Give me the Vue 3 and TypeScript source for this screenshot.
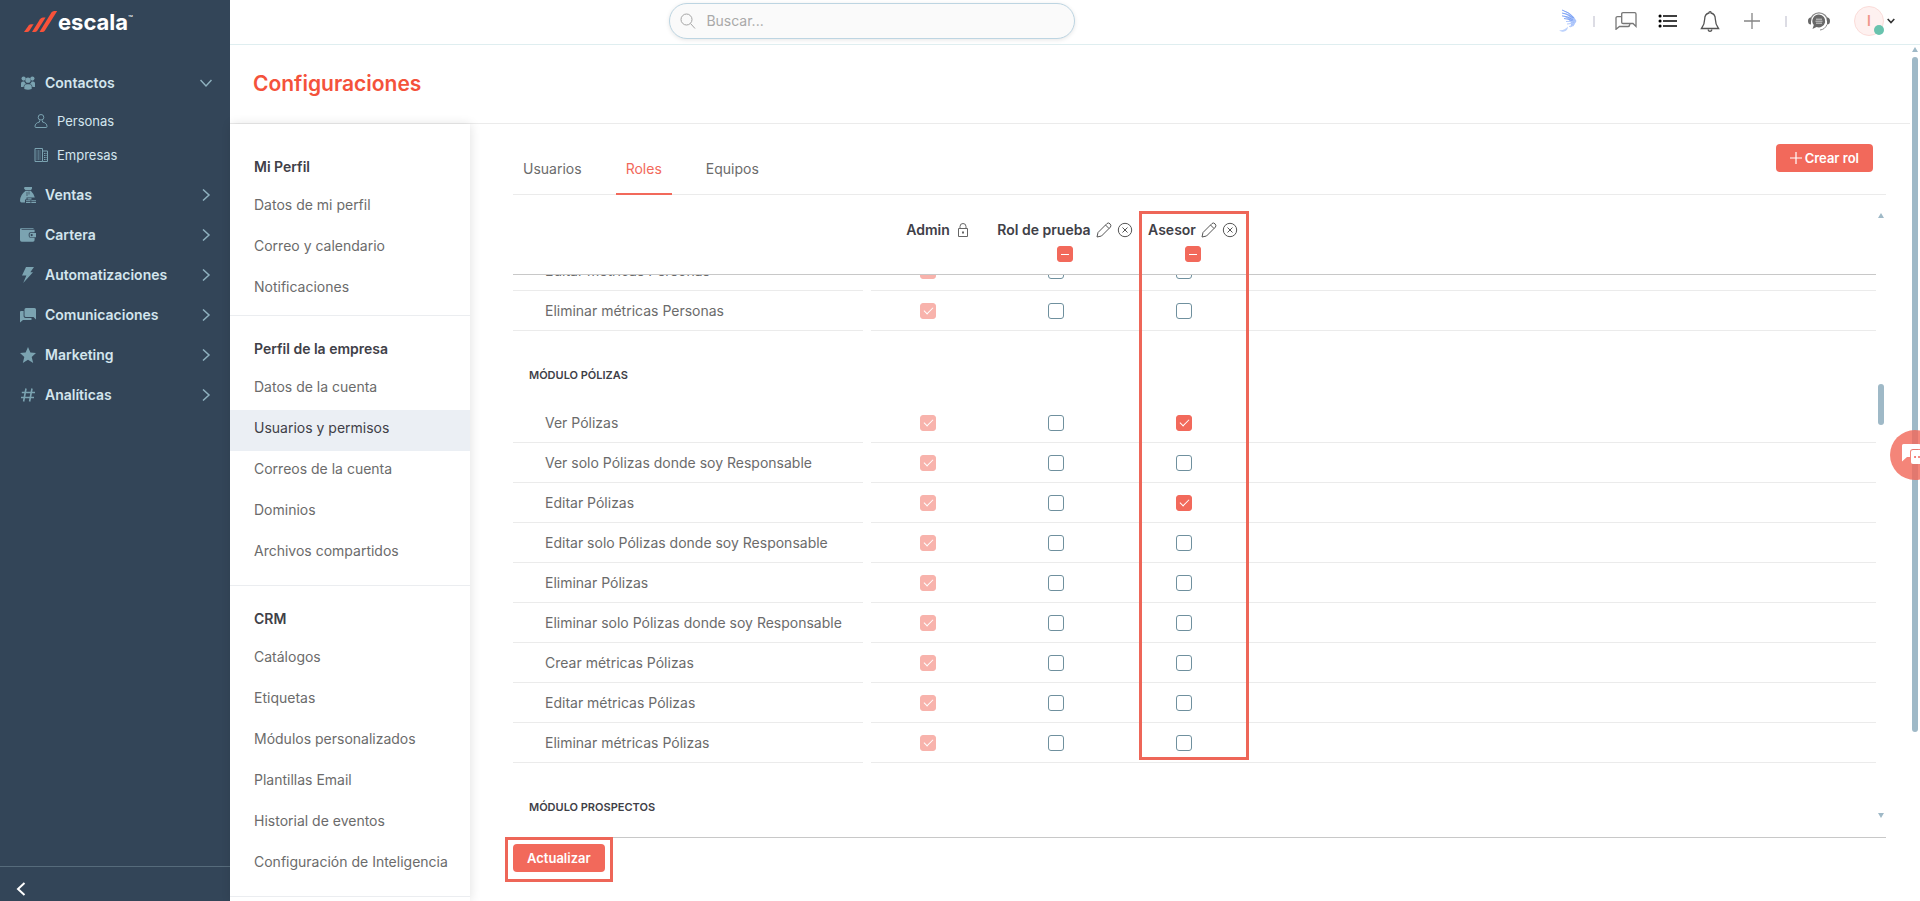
<script setup lang="ts">
import { onMounted, ref } from 'vue'

interface MenuItem {
  label: string
  icon: string
  children?: { label: string; icon: string }[]
}

interface Section {
  title: string
  items: string[]
}

interface Role {
  name: string
  locked?: boolean
}

interface Permission {
  name: string
  granted: boolean[]
}

interface Module {
  title?: string
  permissions: Permission[]
}

const menu: MenuItem[] = [
  {
    label: 'Contactos',
    icon: 'group',
    children: [
      { label: 'Personas', icon: 'person' },
      { label: 'Empresas', icon: 'building' },
    ],
  },
  { label: 'Ventas', icon: 'bag' },
  { label: 'Cartera', icon: 'wallet' },
  { label: 'Automatizaciones', icon: 'bolt' },
  { label: 'Comunicaciones', icon: 'chat' },
  { label: 'Marketing', icon: 'star' },
  { label: 'Analíticas', icon: 'hash' },
]

const sections: Section[] = [
  { title: 'Mi Perfil', items: ['Datos de mi perfil', 'Correo y calendario', 'Notificaciones'] },
  {
    title: 'Perfil de la empresa',
    items: ['Datos de la cuenta', 'Usuarios y permisos', 'Correos de la cuenta', 'Dominios', 'Archivos compartidos'],
  },
  {
    title: 'CRM',
    items: [
      'Catálogos',
      'Etiquetas',
      'Módulos personalizados',
      'Plantillas Email',
      'Historial de eventos',
      'Configuración de Inteligencia',
    ],
  },
]
const activeSetting = 'Usuarios y permisos'

const tabs = ['Usuarios', 'Roles', 'Equipos']
const activeTab = ref('Roles')

const roles: Role[] = [{ name: 'Admin', locked: true }, { name: 'Rol de prueba' }, { name: 'Asesor' }]

const row = (name: string, asesor = false): Permission => ({ name, granted: [true, false, asesor] })

const modules = ref<Module[]>([
  { permissions: [row('Editar métricas Personas'), row('Eliminar métricas Personas')] },
  {
    title: 'MÓDULO PÓLIZAS',
    permissions: [
      row('Ver Pólizas', true),
      row('Ver solo Pólizas donde soy Responsable'),
      row('Editar Pólizas', true),
      row('Editar solo Pólizas donde soy Responsable'),
      row('Eliminar Pólizas'),
      row('Eliminar solo Pólizas donde soy Responsable'),
      row('Crear métricas Pólizas'),
      row('Editar métricas Pólizas'),
      row('Eliminar métricas Pólizas'),
    ],
  },
  { title: 'MÓDULO PROSPECTOS', permissions: [] },
])

const scroller = ref<HTMLElement | null>(null)
onMounted(() => {
  if (scroller.value) scroller.value.scrollTop = 24
})
</script>

<template>
  <div class="app">
    <aside class="sidebar">
      <a class="logo" href="#" aria-label="escala">
        <svg width="34" height="22" viewBox="0 0 34 22" aria-hidden="true">
          <g fill="#f9523a">
            <path d="M0 21 4.600 14.600Q5.600 13.300 7.200 13.300H9.600L5.200 19.900Q4.400 21 3 21Z" />
            <path d="M8 21 16 8.200Q17.200 6.500 19 6.500H21.600L13.200 19.700Q12.300 21 10.800 21Z" />
            <path d="M15.500 21 27.400 1.600Q28.400 0 30.200 0H33.200L20.800 19.700Q19.900 21 18.400 21Z" />
          </g>
        </svg>
        <span class="brand">escala</span><span class="tm">™</span>
      </a>
      <nav class="menu" aria-label="Principal">
        <template v-for="item in menu" :key="item.label">
          <a class="menu-item" href="#">
            <svg class="menu-icon" width="16" height="16" viewBox="0 0 16 16" aria-hidden="true">
              <g v-if="item.icon === 'group'">
                <circle cx="3.600" cy="3.600" r="2.100" />
                <circle cx="12.400" cy="3.600" r="2.100" />
                <circle cx="8" cy="5.200" r="2.600" />
                <path d="M1 12V8.500Q1 6.500 3 6.500H4.300Q5 8.300 6 8.700 3.500 9.400 3.500 12Z" />
                <path d="M15 12V8.500Q15 6.500 13 6.500H11.700Q11 8.300 10 8.700 12.500 9.400 12.500 12Z" />
                <path d="M4.300 14V11.500Q4.300 9.200 6.600 9.200H9.400Q11.700 9.200 11.700 11.500V14Q8 15.500 4.300 14Z" />
              </g>
              <g v-else-if="item.icon === 'bag'">
                <path d="M4.500 0H12V1.500L11 3.300H5.500L4 1.500Z" />
                <path d="M5.300 4H11Q14.500 7.500 14.800 10.500H6.500V12.500H5V15.500H1.500Q0 15.500 0 13.500 .5 7.500 5.300 4Z" />
                <path d="M7.500 11.300H11.500V12.500H7.500ZM6 13.200H10.500V14.300H6ZM11.300 13.200H16V14.300H11.300ZM6 15H10.500V16H6ZM11.300 15H16V16H11.300Z" />
                <path d="M7 5V9M9 4.500V7.500" stroke="#334558" stroke-width=".7" />
              </g>
              <g v-else-if="item.icon === 'wallet'">
                <path d="M1 1.200H13.500V2H1.600V2.700H14.600V5.200H10.500Q8.700 5.200 8.700 7V9Q8.700 10.800 10.500 10.800H14.600V13Q14.600 14.800 13 14.800H1.800Q0 14.800 0 13V2.500Q0 1.200 1 1.200Z" />
                <path d="M10.600 6H16V10.200H10.600Q9.600 10.200 9.600 9.200V7Q9.600 6 10.600 6Z" />
                <circle cx="11.700" cy="8.100" r="1.100" fill="#334558" />
              </g>
              <path v-else-if="item.icon === 'bolt'" d="M6 0H14L10.300 5.300H13L3.200 16 6.400 8.500H2Z" />
              <g v-else-if="item.icon === 'chat'">
                <path d="M6 1H14.500Q16 1 16 2.500V12.500L13.500 10H6Q4.500 10 4.500 8.500V2.500Q4.500 1 6 1Z" />
                <path d="M1 4H3.600V9.200Q3.800 10.800 5.500 11H11.500V13H3L0 15.500V5Q0 4 1 4Z" />
              </g>
              <path v-else-if="item.icon === 'star'" d="M8 0 10.400 5.500 16 6 11.700 10 13.200 16 8 12.700 2.800 16 4.300 10 0 6 5.600 5.500Z" />
              <path v-else d="M6 1.500 3.600 14.500M12 1.500 9.600 14.500M1.800 5.500H15M1 10.500H14" fill="none" stroke="#7ba3b1" stroke-width="1.600" />
            </svg>
            <span class="menu-label">{{ item.label }}</span>
            <svg v-if="item.children" width="12" height="12" viewBox="0 0 12 12" fill="none" stroke="#8fb1bf" stroke-width="1.500" aria-hidden="true"><path d="M.5 3 6 9 11.500 3" /></svg>
            <svg v-else width="12" height="12" viewBox="0 0 12 12" fill="none" stroke="#8fb1bf" stroke-width="1.500" aria-hidden="true"><path d="M3 .5 9 6 3 11.500" /></svg>
          </a>
          <div v-if="item.children" class="submenu">
            <a v-for="child in item.children" :key="child.label" class="submenu-item" href="#">
              <svg width="14" height="14" viewBox="0 0 14 14" fill="none" stroke="#7ba3b1" aria-hidden="true">
                <g v-if="child.icon === 'person'">
                  <circle cx="7" cy="3.300" r="2.800" />
                  <path d="M5.500 6.500V8Q1 9 1 12.500Q1 13.500 2 13.500H12Q13 13.500 13 12.500Q13 9 8.500 8V6.500" />
                </g>
                <g v-else>
                  <path d="M1 13.500V.5H8.500V13.500ZM8.500 3H13.500V13.500H8.500" />
                  <path d="M2.500 3H7M2.500 5H7M2.500 7H7M2.500 9H7M2.500 11H7M10 5.500H12.500M10 7.500H12.500M10 9.500H12.500M10 11.500H12.500" stroke-dasharray="1 .5" />
                </g>
              </svg>
              <span>{{ child.label }}</span>
            </a>
          </div>
        </template>
      </nav>
      <button class="collapse" type="button" aria-label="Contraer menú">
        <svg width="10" height="14" viewBox="0 0 10 14" fill="none" stroke="#fff" stroke-width="2" aria-hidden="true"><path d="M8.500 1 2 7 8.500 13" /></svg>
      </button>
    </aside>

    <div class="workspace">
      <header class="topbar">
        <label class="search">
          <svg width="16" height="16" viewBox="0 0 16 16" fill="none" stroke="#a5a5a5" aria-hidden="true"><circle cx="6.500" cy="6.500" r="5.500" /><path d="M10.500 10.500 15 15.500" /></svg>
          <input type="search" placeholder="Buscar..." aria-label="Buscar" />
        </label>
        <div class="tools">
          <button class="tool" type="button" aria-label="Asistente">
            <svg width="20" height="24" viewBox="0 0 20 24" aria-hidden="true">
              <path d="M4 1Q15 4 18.500 12 16 17 12 18.500 14 14 12 12.500 9 8 4 7Q9 7 12 9 9 5 4 4Q9 4 13 7 9 3 4 1Z" fill="#a9c3fa" />
              <path d="M4 1Q11 3 16 9M4 4Q10 4.500 15 9M4 6.800Q10 7 15 11M6 9.500Q11 9.500 16 13" stroke="#7fa3f5" fill="none" />
              <path d="M8 12.500Q13 12 17.500 13M9 15Q13 14 17 15M11 17.500 16 16.500" stroke="#b5cbfc" fill="none" />
              <path d="M1 21Q6 22 10 17.500 9.500 22 6 22.500 3 23.500 1 21Z" fill="#bdd2fc" />
            </svg>
          </button>
          <span class="sep sep-first"></span>
          <button class="tool" type="button" aria-label="Conversaciones">
            <svg width="22" height="18" viewBox="0 0 22 18" fill="none" stroke="#777" stroke-width="1.300" aria-hidden="true">
              <path d="M8 .7H19.700Q21 .7 21 2V14.500L18 11.500H8Q6.700 11.500 6.700 10.200V2Q6.700 .7 8 .7Z" />
              <path d="M6.500 4.700H2.500Q1 4.700 1 6V17.300L4.500 14.500H13Q14.500 14.500 15 12" />
            </svg>
          </button>
          <button class="tool" type="button" aria-label="Tareas">
            <svg width="20" height="14" viewBox="0 0 20 14" fill="none" stroke="#000" stroke-width="1.500" aria-hidden="true">
              <path d="M5 2H19M5 7H19M5 12H19" /><path d="M2 2H2.100M2 7H2.100M2 12H2.100" stroke-width="3" stroke-linecap="round" />
            </svg>
          </button>
          <button class="tool" type="button" aria-label="Notificaciones">
            <svg width="20" height="21" viewBox="0 0 20 21" fill="none" stroke="#555" stroke-width="1.300" aria-hidden="true">
              <path d="M9 2V1.500Q9 .7 10 .7T11 1.500V2Q15.300 3 15.300 8 15.300 13 18.500 17.500H1.500Q4.700 13 4.700 8 4.700 3 9 2Z" /><path d="M8 18.500Q8.500 20.300 10 20.300T12 18.500" />
            </svg>
          </button>
          <button class="tool" type="button" aria-label="Crear">
            <svg width="16" height="16" viewBox="0 0 16 16" stroke="#858585" stroke-width="1.300" aria-hidden="true"><path d="M8 0V16M0 8H16" /></svg>
          </button>
          <span class="sep sep-last"></span>
          <button class="tool" type="button" aria-label="Soporte">
            <svg width="22" height="19" viewBox="0 0 22 19" aria-hidden="true">
              <path d="M2.500 9A8.500 8.200 0 0 1 19.500 9" fill="none" stroke="#8a8a8a" stroke-width="1.300" />
              <path d="M11 2.600A6.500 6.400 0 1 1 8.500 15L4.500 17 5.800 13A6.500 6.400 0 0 1 11 2.600Z" fill="#686868" />
              <path d="M8 7.200H14M7.500 9.200H14.500M8 11.200H14" stroke="#ddd" stroke-width=".9" />
              <path d="M3 5.500V12.500Q0 12.500 0 9T3 5.500ZM19 5.500V12.500Q22 12.500 22 9T19 5.500Z" fill="#686868" />
              <path d="M19 12.500Q17 17.500 12 18" fill="none" stroke="#8a8a8a" />
            </svg>
          </button>
          <button class="profile" type="button" aria-label="Cuenta">
            <span class="avatar">I<span class="status"></span></span>
            <svg width="8" height="6" viewBox="0 0 8 6" fill="none" stroke="#333" stroke-width="1.600" aria-hidden="true"><path d="M.7 1 4 4.500 7.300 1" /></svg>
          </button>
        </div>
      </header>

      <div class="page">
        <div class="title-row"><h1>Configuraciones</h1></div>
        <div class="columns">
          <nav class="settings" aria-label="Configuraciones">
            <section v-for="section in sections" :key="section.title" class="settings-section">
              <h2>{{ section.title }}</h2>
              <a v-for="item in section.items" :key="item" href="#" :class="{ active: item === activeSetting }">{{ item }}</a>
            </section>
          </nav>

          <main class="content">
            <div class="tabs">
              <div class="tab-list" role="tablist">
                <button
                  v-for="tab in tabs"
                  :key="tab"
                  type="button"
                  role="tab"
                  :aria-selected="tab === activeTab"
                  :class="['tab', { current: tab === activeTab }]"
                  @click="activeTab = tab"
                >{{ tab }}</button>
              </div>
              <button class="primary create" type="button">
                <svg width="12" height="12" viewBox="0 0 12 12" stroke="#fff" stroke-width="1.200" aria-hidden="true"><path d="M6 0V12M0 6H12" /></svg>Crear rol
              </button>
            </div>

            <div class="matrix">
              <div ref="scroller" class="scroller">
                <table>
                  <colgroup>
                    <col class="col-name" />
                    <col v-for="role in roles" :key="role.name" class="col-role" />
                    <col />
                  </colgroup>
                  <thead>
                    <tr>
                      <td></td>
                      <th v-for="role in roles" :key="role.name" scope="col">
                        <div class="role">
                          <span class="role-name">{{ role.name }}</span>
                          <svg v-if="role.locked" class="lock" width="10" height="14" viewBox="0 0 10 14" fill="none" stroke="#666" aria-label="Bloqueado" role="img">
                            <path d="M.5 5.500H9.500V13.500H.5ZM2 5.500V3.500Q2 .5 5 .5T8 3.500V5.500" /><path d="M5 8.500V10.500" stroke-width="2" />
                          </svg>
                          <template v-else>
                            <button class="mini" type="button" :aria-label="`Editar ${role.name}`">
                              <svg width="16" height="16" viewBox="0 0 16 16" fill="none" stroke="#555" aria-hidden="true"><path d="M1 15 2 10.500 11 1.500Q12.500 .3 14 1.800T14.500 5L5.500 14ZM9.500 3 13 6.500" /></svg>
                            </button>
                            <button class="mini" type="button" :aria-label="`Eliminar ${role.name}`">
                              <svg width="16" height="16" viewBox="0 0 16 16" fill="none" stroke="#555" aria-hidden="true"><circle cx="8" cy="8" r="6.700" /><path d="M5.500 5.500 10.500 10.500M10.500 5.500 5.500 10.500" /></svg>
                            </button>
                          </template>
                        </div>
                        <div v-if="!role.locked" class="select-all">
                          <input type="checkbox" :indeterminate="true" :aria-label="`Todos los permisos de ${role.name}`" />
                        </div>
                      </th>
                      <td></td>
                    </tr>
                  </thead>
                  <tbody v-for="(module, m) in modules" :key="m">
                    <tr v-if="module.title" class="module"><th colspan="5" scope="rowgroup">{{ module.title }}</th></tr>
                    <tr v-for="permission in module.permissions" :key="permission.name" class="permission">
                      <th scope="row"><div class="permission-name">{{ permission.name }}</div></th>
                      <td v-for="(role, r) in roles" :key="role.name">
                        <input v-model="permission.granted[r]" type="checkbox" :disabled="role.locked" :aria-label="`${permission.name}: ${role.name}`" />
                      </td>
                      <td></td>
                    </tr>
                  </tbody>
                </table>
              </div>
              <div class="track inner" aria-hidden="true">
                <span class="arrow up"></span><span class="thumb"></span><span class="arrow down"></span>
              </div>
              <div class="frame frame-column"></div>
            </div>

            <div class="actions">
              <button class="primary" type="button">Actualizar</button>
              <div class="frame frame-button"></div>
            </div>
          </main>
        </div>

        <div class="track outer" aria-hidden="true"><span class="arrow up"></span><span class="thumb"></span></div>
      </div>
    </div>

    <button class="chat" type="button" aria-label="Abrir chat">
      <svg width="28" height="22" viewBox="0 0 28 22" aria-hidden="true">
        <path d="M1.500 0H17Q18.500 0 18.500 1.500V5H11Q8 5 8 8V13H5L0 17.500V1.500Q0 0 1.500 0Z" fill="#fff" />
        <rect x="9" y="6" width="18" height="14" rx="2" fill="#fff" />
        <path d="M13 13H13.100M17 13H17.100M21 13H21.100" stroke="#f0695e" stroke-width="2" stroke-linecap="round" />
      </svg>
    </button>
  </div>
</template>

<style>
body {
  margin: 0;
  overflow: hidden;
}
</style>

<style scoped>
.app {
  display: flex;
  position: relative;
  height: 100vh;
  overflow: hidden;
  background: #fff;
  color: #6b6b6b;
  font-family: Inter, "Noto Sans", sans-serif;
  font-size: 14px;
  line-height: 20px;
}
button {
  font: inherit;
  border: 0;
  padding: 0;
  background: none;
  cursor: pointer;
}
a {
  color: inherit;
  text-decoration: none;
}
h1,
h2 {
  margin: 0;
}
svg {
  flex: none;
  display: block;
}

.sidebar {
  flex: 0 0 230px;
  display: flex;
  flex-direction: column;
  background: #334558;
  color: #d3e6ee;
}
.logo {
  display: flex;
  height: 44px;
  padding-left: 24px;
  align-items: center;
  color: #fff;
}
.brand {
  font-size: 22px;
  font-weight: 700;
}
.tm {
  align-self: flex-start;
  margin-top: 8px;
  font-size: 8px;
}
.menu {
  flex: 1;
  padding-top: 19px;
}
.menu-item {
  display: flex;
  align-items: center;
  height: 40px;
  padding: 0 18px 0 20px;
  gap: 9px;
  font-weight: 600;
}
.menu-icon {
  fill: #7ba3b1;
}
.menu-label {
  flex: 1;
}
.submenu {
  padding: 1px 0 3px;
}
.submenu-item {
  display: flex;
  align-items: center;
  height: 34px;
  padding-left: 34px;
  gap: 9px;
  font-size: 13px;
}
.collapse {
  display: flex;
  align-items: center;
  height: 35px;
  padding: 10px 0 0 16px;
  border-top: 1px solid #566b7b;
}

.workspace {
  flex: 1;
  min-width: 0;
  display: flex;
  flex-direction: column;
}
.topbar {
  display: flex;
  flex: 0 0 44px;
  align-items: center;
  border-bottom: 1px solid #dfeef0;
}
.search {
  display: flex;
  align-items: center;
  box-sizing: border-box;
  width: 24%;
  height: 36px;
  margin: 0 auto 2px 26%;
  padding: 0 10px;
  gap: 10px;
  border: 1px solid #bdd5e2;
  border-radius: 18px;
  background: #fafafa;
  box-shadow: 0 1px 4px #0000001a;
}
.search input {
  flex: 1;
  min-width: 0;
  border: 0;
  padding: 0;
  outline: 0;
  background: none;
  color: #555;
  font: inherit;
}
.search input::placeholder {
  color: #a9a9a9;
}
.tools {
  display: flex;
  align-items: center;
  padding: 0 25px 2px 0;
}
.tool {
  display: flex;
  justify-content: center;
  align-items: center;
  width: 42px;
  height: 42px;
}
.sep {
  width: 2px;
  height: 11px;
  background: #dcdce4;
}
.sep-first {
  margin: 0 10px 0 4px;
}
.sep-last {
  margin: 0 11px 0 12px;
}
.profile {
  display: flex;
  align-items: center;
  gap: 3px;
  margin-left: 14px;
}
.avatar {
  position: relative;
  box-sizing: border-box;
  width: 30px;
  height: 30px;
  border: 1px solid #fbdcd9;
  border-radius: 50%;
  background: #fef1f0;
  color: #f0968b;
  font-weight: 600;
  line-height: 28px;
}
.status {
  position: absolute;
  right: -1px;
  bottom: 0;
  width: 10px;
  height: 10px;
  border-radius: 50%;
  background: #68c3ae;
}

.page {
  position: relative;
  flex: 1;
  min-height: 0;
  display: flex;
  flex-direction: column;
}
.title-row {
  flex: 0 0 78px;
  display: flex;
  align-items: center;
  margin-right: 10px;
  padding-left: 23px;
  border-bottom: 1px solid #ebebeb;
}
h1 {
  color: #f4523b;
  font-size: 21px;
  font-weight: 600;
  line-height: 28px;
}
.columns {
  flex: 1;
  min-height: 0;
  display: flex;
}
.settings {
  flex: 0 0 240px;
  overflow: hidden;
  box-shadow: 1px 0 10px #0000001c;
}
.settings-section {
  padding: 23px 0 11px;
  border-bottom: 1px solid #ebedf0;
}
.settings-section:first-child {
  padding: 33px 0 5px;
}
.settings-section h2 {
  padding: 0 24px 10px;
  color: #404047;
  font-size: 14px;
  font-weight: 600;
  line-height: 20px;
}
.settings-section a {
  display: block;
  padding: 8px 12px 13px 24px;
  white-space: nowrap;
}
.settings-section .active {
  background: #ebeff4;
  color: #404047;
}

.content {
  flex: 1;
  min-width: 0;
  display: flex;
  flex-direction: column;
  padding: 0 34px 0 43px;
}
.tabs {
  flex: 0 0 70px;
  display: flex;
  justify-content: space-between;
  border-bottom: 1px solid #ebebeb;
}
.tab-list {
  display: flex;
  gap: 24px;
  height: 71px;
  margin-bottom: -1px;
}
.tab {
  padding: 21px 10px 0;
  border-bottom: 2px solid transparent;
  color: #6b6b6b;
}
.tab.current {
  border-bottom-color: #f2695b;
  color: #f2695b;
}
.primary {
  height: 28px;
  padding: 0 14px;
  border-radius: 4px;
  background: #f2695b;
  color: #fff;
  font-size: 13px;
  font-weight: 600;
}
.create {
  display: flex;
  align-items: center;
  gap: 3px;
  margin: 20px 13px 0 0;
}

.matrix {
  position: relative;
  flex: 1;
  min-height: 0;
  border-bottom: 1px solid #c8c8c8;
}
.scroller {
  box-sizing: border-box;
  height: 100%;
  margin-right: 10px;
  padding-bottom: 40px;
  overflow-y: auto;
  scrollbar-width: none;
}
table {
  width: 100%;
  table-layout: fixed;
  border-spacing: 0;
}
.col-name {
  width: 358px;
}
.col-role {
  width: 128px;
}
td,
th {
  padding: 0;
  font-weight: 400;
}
thead {
  position: sticky;
  top: 0;
  z-index: 1;
  background: #fff;
}
thead td,
thead th {
  box-sizing: border-box;
  height: 80px;
  padding: 24px 0 0 4px;
  vertical-align: top;
  border-bottom: 1px solid #c8c8c8;
}
.role {
  display: flex;
  align-items: center;
  justify-content: center;
  gap: 5px;
  height: 22px;
  color: #404047;
  white-space: nowrap;
}
.role-name {
  font-weight: 600;
}
.lock {
  margin-left: 3px;
}
.select-all {
  display: flex;
  justify-content: center;
  padding-top: 5px;
}
.module th {
  height: 72px;
  padding: 15px 16px 0;
  box-sizing: border-box;
  color: #404047;
  font-size: 11px;
  font-weight: 600;
  text-align: left;
}
.permission th,
.permission td {
  height: 40px;
}
.permission td {
  box-sizing: border-box;
  padding: 0 14px 2px 0;
  border-bottom: 1px solid #ebebeb;
  text-align: center;
}
.permission-name {
  margin-right: 8px;
  padding-left: 32px;
  border-bottom: 1px solid #ebebeb;
  line-height: 39px;
  text-align: left;
  white-space: nowrap;
}

input[type="checkbox"] {
  appearance: none;
  display: inline-grid;
  place-items: center;
  box-sizing: border-box;
  width: 16px;
  height: 16px;
  margin: 0;
  border: 1px solid #6f909e;
  border-radius: 3px;
  background: #fff;
  vertical-align: middle;
}
input[type="checkbox"]:checked,
input[type="checkbox"]:indeterminate {
  border-color: #f2695b;
  background: #f2695b;
}
input[type="checkbox"]:checked::after {
  content: "";
  width: 8px;
  height: 4px;
  margin-bottom: 3px;
  border: solid #fff;
  border-width: 0 0 1px 1px;
  transform: rotate(-45deg);
}
input[type="checkbox"]:indeterminate::after {
  content: "";
  width: 8px;
  height: 1px;
  background: #fff;
}
input[type="checkbox"]:disabled {
  opacity: 0.5;
}

.actions {
  position: relative;
  flex: 0 0 57px;
  padding-top: 6px;
}

.frame {
  position: absolute;
  z-index: 2;
  box-sizing: border-box;
  border: 3px solid #ee6658;
  pointer-events: none;
}
.frame-column {
  top: 16px;
  left: 626px;
  width: 110px;
  height: 549px;
}
.frame-button {
  top: -1px;
  left: -8px;
  width: 108px;
  height: 45px;
}

.track {
  position: absolute;
  z-index: 1;
  display: flex;
  flex-direction: column;
  width: 6px;
}
.inner {
  top: 18px;
  right: 2px;
  bottom: 19px;
}
.outer {
  top: 2px;
  right: 2px;
  bottom: 0;
}
.thumb {
  border-radius: 3px;
  background: #9fb9c7;
}
.inner .thumb {
  height: 41px;
  margin: 166px 0 auto;
}
.outer .thumb {
  height: 79%;
  margin-top: 5px;
}
.arrow {
  width: 0;
  height: 0;
  border: 3px solid transparent;
}
.up {
  border-top: 0;
  border-bottom: 5px solid #9fb9c7;
}
.down {
  border-bottom: 0;
  border-top: 5px solid #9fb9c7;
}

.chat {
  position: absolute;
  z-index: 3;
  right: -20px;
  top: calc(50% - 21px);
  width: 50px;
  height: 50px;
  padding: 0 0 0 12px;
  border-radius: 50%;
  background: #f2695bd0;
}
</style>
